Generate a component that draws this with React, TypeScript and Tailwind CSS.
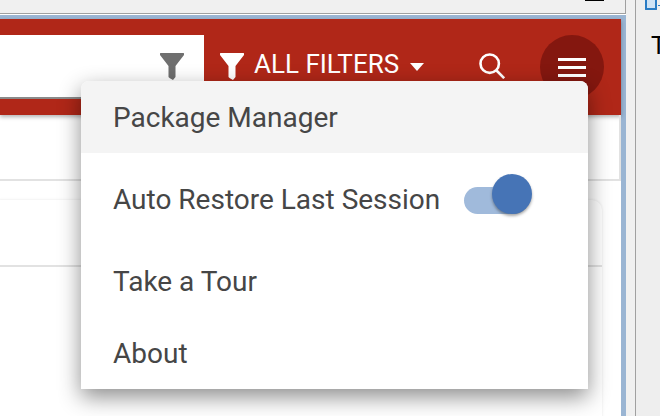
function FunnelIcon({ className = '' }: { className?: string }) {
  return (
    <svg viewBox="0 0 24 27" className={className} fill="currentColor">
      <path d="M0 0.5 Q0 0 0.5 0 H23.5 Q24 0 24 0.5 V2 L15.5 13 V24 L13 27 Q9 25 8.5 24 V13 L0 2 Z" />
    </svg>
  );
}

function SearchIcon() {
  return (
    <svg viewBox="0 0 26 26" className="h-[26px] w-[26px]" fill="none" stroke="white" strokeWidth="2.6">
      <circle cx="10.7" cy="10.7" r="9.2" />
      <path d="M17 17 L25.2 25.2" />
    </svg>
  );
}

function MenuItem({ label, active, height, children }: { label: string; active?: boolean; height: string; children?: React.ReactNode }) {
  return (
    <div className={`flex items-center pl-[32px] text-[28px] text-[#464646] ${height} ${active ? 'bg-[#f4f4f4] rounded-t-[8px]' : ''}`}>
      <span>{label}</span>
      {children}
    </div>
  );
}

export default function App() {
  return (
    <div className="relative flex h-[416px] w-[660px] overflow-hidden bg-[#f0f0f0] font-['Roboto',sans-serif]">
      {/* app window */}
      <div className="flex w-[626px] shrink-0 flex-col">
        <div className="flex h-[13px] justify-end border-r border-[#a0a0a0] pr-[21px]">
          <div className="h-px w-[19px] bg-black" />
        </div>
        <div className="h-px bg-[#a0a0a0]" />
        <div className="h-px bg-white" />
        <div className="flex min-h-0 flex-1 flex-col border-t-4 border-r-[5px] border-[#9ab5d3] bg-white">
          {/* header */}
          <div className="flex h-[96px] shrink-0 flex-col bg-[#b02718] shadow-[0_2px_4px_rgba(0,0,0,0.3)]">
            <div className="flex pt-4">
              <div className="flex h-[64px] w-[204px] justify-end border-b-2 border-[#8a8a8a] bg-white pt-[18px] pr-[20px]">
                <FunnelIcon className="h-[27px] w-[24px] text-[#6f6f6f]" />
              </div>
              <div className="flex h-[62px] flex-1 items-start pt-[15px] pl-[16px] text-white">
                <FunnelIcon className="mt-[3px] h-[27px] w-[24px] text-white" />
                <span className="ml-[10px] mt-[-2px] text-[26px] leading-[32px]">ALL FILTERS</span>
                <div className="ml-[11px] mt-[13px] h-0 w-0 border-x-[7.5px] border-t-[8px] border-x-transparent border-t-white" />
                <div className="ml-[55px] mt-[3px]"><SearchIcon /></div>
                <div className="ml-[35px] mt-[-15px] flex h-[64px] w-[64px] flex-col items-center justify-center gap-[5px] rounded-full bg-[#84170f]">
                  <div className="h-[3px] w-[28px] bg-white" />
                  <div className="h-[3px] w-[28px] bg-white" />
                  <div className="h-[3px] w-[28px] bg-white" />
                </div>
              </div>
            </div>
          </div>
          {/* page behind the menu */}
          <div className="flex flex-1 flex-col">
            <div className="h-[66px] border-r-2 border-b-2 border-[#e2e2e2]" />
            <div className="ml-[-10px] mr-[19px] mb-[-20px] mt-[19px] flex-1 rounded-[10px] shadow-[0_0_3px_rgba(0,0,0,0.1)]">
              <div className="h-[67px] border-b-2 border-[#e2e2e2]" />
            </div>
          </div>
        </div>
      </div>

      {/* side panel */}
      <div className="flex flex-1 pl-[9px]">
        <div className="flex-1 border-l border-[#a0a0a0] bg-[#eeeeee] pl-[9px]">
          <div className="flex items-center gap-px">
            <div className="h-[10px] w-[12px] shrink-0 rounded-b-[1px] border-2 border-t-0 border-[#2a7cc4] bg-[#cfe3f5]" />
            <div className="h-px w-[2px] bg-[#2a7cc4]" />
          </div>
          <div className="mt-[21px] pl-[6px] font-['Liberation_Sans',sans-serif] text-[25px] leading-[28px] text-black">T</div>
        </div>
      </div>

      {/* dropdown menu */}
      <div className="absolute left-[81px] top-[81px] h-[308px] w-[507px] rounded-t-[8px] bg-white shadow-[0_8px_22px_rgba(0,0,0,0.45)]">
        <MenuItem label="Package Manager" active height="h-[72px] pt-[2px]" />
        <MenuItem label="Auto Restore Last Session" height="h-[94px]">
          <div className="relative ml-[24px] h-[27px] w-[64px] rounded-full bg-[#a0badb]">
            <div className="absolute left-[28px] top-[-13px] h-[40px] w-[40px] rounded-full bg-[#4674b6] shadow-[0_2px_3px_rgba(0,0,0,0.35)]" />
          </div>
        </MenuItem>
        <MenuItem label="Take a Tour" height="h-[70px]" />
        <MenuItem label="About" height="h-[72px] pt-[2px]" />
      </div>
    </div>
  );
}
